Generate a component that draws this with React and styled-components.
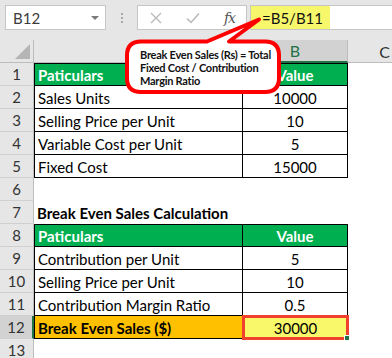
import React from "react";
import styled, { createGlobalStyle, css } from "styled-components";

const Global = createGlobalStyle`
  html, body {
    margin: 0;
    padding: 0;
    background: #fff;
  }
  body {
    font-family: Lato, "Open Sans", sans-serif;
  }
`;

const Frame = styled.div`
  position: relative;
  width: 392px;
  height: 358px;
  overflow: hidden;
  background: #fff;
`;

const Toolbar = styled.div`
  display: flex;
  align-items: center;
  height: 40px;
  padding: 0 0 5px 5px;
  box-sizing: border-box;
  background: #e6e6e6;
`;

const Box = styled.div`
  height: 25px;
  box-sizing: border-box;
  background: #fff;
  border: 1px solid #c6c6c6;
  display: flex;
  align-items: center;
`;

const NameBox = styled(Box)`
  width: 101px;
  padding: 0 6px 0 7px;
  justify-content: space-between;
  font-size: 15px;
  color: #3c3c3c;
`;

const Caret = styled.span`
  width: 0;
  height: 0;
  border-left: 4px solid transparent;
  border-right: 4px solid transparent;
  border-top: 4px solid #7a7a7a;
`;

const Grip = styled.div`
  width: 31px;
  display: flex;
  flex-direction: column;
  align-items: center;
  gap: 2px;

  i {
    width: 2px;
    height: 2px;
    background: #a8a8a8;
  }
`;

const FxButtons = styled(Box)`
  width: 110px;
  justify-content: space-between;
  padding: 0 11px 0 12px;
  color: #bcbcbc;
`;

const Fx = styled.span`
  font-family: "DejaVu Serif", "Liberation Serif", serif;
  font-style: italic;
  font-size: 14px;
  color: #555;
  letter-spacing: -1px;
`;

const FormulaInput = styled(Box)`
  flex: 1;
  margin-left: 3px;
  border-right: none;
  align-items: stretch;
`;

const Formula = styled.span`
  display: flex;
  align-items: center;
  padding: 0 7px 0 11px;
  background: #f7f76c;
  font-size: 15px;
  color: #111;
`;

const Row = styled.div`
  display: flex;
  height: 23px;
`;

const RowHead = styled.div`
  width: 34px;
  flex: none;
  box-sizing: border-box;
  display: flex;
  align-items: center;
  justify-content: center;
  background: ${({ selected }) => (selected ? "#d2d2d2" : "#e6e6e6")};
  border-right: ${({ selected }) =>
    selected ? "2px solid #217346" : "1px solid #bdbdbd"};
  border-bottom: 1px solid #d0d0d0;
  font-size: 15px;
  color: #333;
`;

const Corner = styled(RowHead)`
  align-items: flex-end;
  justify-content: flex-end;
  padding: 0 3px 3px 0;
  border-bottom: 1px solid #bdbdbd;
`;

const ColHead = styled.div`
  width: ${({ w }) => w}px;
  flex: none;
  box-sizing: border-box;
  display: flex;
  align-items: center;
  justify-content: center;
  background: ${({ selected }) => (selected ? "#d2d2d2" : "#e6e6e6")};
  border-right: 1px solid #bdbdbd;
  border-bottom: ${({ selected }) =>
    selected ? "2px solid #217346" : "1px solid #bdbdbd"};
  font-size: 16px;
  color: ${({ selected }) => (selected ? "#217346" : "#333")};
`;

const fills = {
  head: "#00b050",
  result: "#ffc000",
};

const Cell = styled.div`
  position: relative;
  box-sizing: border-box;
  display: flex;
  align-items: center;
  flex: none;
  width: ${({ w }) => w}px;
  padding: 1px 3px 0;
  font-size: 15px;
  color: #000;
  white-space: nowrap;
  justify-content: ${({ center }) => (center ? "center" : "flex-start")};
  background: ${({ kind }) => fills[kind] || "transparent"};
  font-weight: ${({ kind }) =>
    kind === "head" || kind === "result" || kind === "title" ? 700 : 400};
  ${({ kind }) => kind === "head" && "color: #fff;"}
  ${({ boxed, first, left }) =>
    boxed &&
    css`
      border-bottom: 1px solid #000;
      border-right: 1px solid #000;
      ${left && "border-left: 1px solid #000;"}
      ${first && "border-top: 1px solid #000;"}
    `}
`;

const Result = styled(Cell)`
  background: #f8f86a;
  border: 2px solid #f2402e;
  box-shadow: 0 0 0 1px #f2402e;
  z-index: 1;
`;

const Handle = styled.span`
  position: absolute;
  right: -4px;
  bottom: -4px;
  width: 4px;
  height: 4px;
  background: #217346;
  border: 1px solid #fff;
`;

const Callout = styled.div`
  position: absolute;
  left: 0;
  top: 0;
  width: 392px;
  height: 100px;
  pointer-events: none;

  svg {
    position: absolute;
    left: 0;
    top: 0;
  }
`;

const CalloutText = styled.div`
  position: absolute;
  left: 140px;
  top: 48px;
  font-family: Lato, "Open Sans", sans-serif;
  font-weight: 700;
  font-size: 11px;
  letter-spacing: -0.25px;
  line-height: 13px;
  color: #111;
  white-space: nowrap;
`;

const rows = [
  { n: 1, a: "Paticulars", b: "Value", kind: "head", first: true },
  { n: 2, a: "Sales Units", b: "10000", kind: "body" },
  { n: 3, a: "Selling Price per Unit", b: "10", kind: "body" },
  { n: 4, a: "Variable Cost per Unit", b: "5", kind: "body" },
  { n: 5, a: "Fixed Cost", b: "15000", kind: "body" },
  { n: 6, kind: "blank" },
  { n: 7, a: "Break Even Sales Calculation", kind: "title" },
  { n: 8, a: "Paticulars", b: "Value", kind: "head", first: true },
  { n: 9, a: "Contribution per Unit", b: "5", kind: "body" },
  { n: 10, a: "Selling Price per Unit", b: "10", kind: "body" },
  { n: 11, a: "Contribution Margin Ratio", b: "0.5", kind: "body" },
  { n: 12, a: "Break Even Sales ($)", b: "30000", kind: "result" },
  { n: 13, kind: "blank" },
];

function SheetRow({ n, a, b, kind, first }) {
  const boxed = kind === "head" || kind === "body" || kind === "result";
  return (
    <Row>
      <RowHead selected={kind === "result"}>{n}</RowHead>
      <Cell w={209} kind={kind} boxed={boxed} first={first} left>
        {a}
      </Cell>
      {kind === "result" ? (
        <Result w={105} center>
          {b}
          <Handle />
        </Result>
      ) : (
        <Cell w={105} kind={kind} boxed={boxed} first={first} center>
          {b}
        </Cell>
      )}
    </Row>
  );
}

export default function App() {
  return (
    <Frame>
      <Global />
      <Toolbar>
        <NameBox>
          B12
          <Caret />
        </NameBox>
        <Grip>
          <i />
          <i />
          <i />
        </Grip>
        <FxButtons>
          <svg width="12" height="12" viewBox="0 0 12 12">
            <path d="M1 1L11 11M11 1L1 11" stroke="#b8b8b8" strokeWidth="1.3" />
          </svg>
          <svg width="14" height="12" viewBox="0 0 14 12">
            <path d="M1 6.5L5 10.5L13 1.5" stroke="#b8b8b8" strokeWidth="1.5" fill="none" />
          </svg>
          <Fx>fx</Fx>
        </FxButtons>
        <FormulaInput>
          <Formula>=B5/B11</Formula>
        </FormulaInput>
      </Toolbar>
      <Row>
        <Corner>
          <svg width="15" height="15" viewBox="0 0 15 15">
            <path d="M15 0V15H0Z" fill="#b5b5b5" />
          </svg>
        </Corner>
        {/* column A's label sits under the callout and is not visible */}
        <ColHead w={209} />
        <ColHead w={105} selected>
          B
        </ColHead>
        <ColHead w={74}>C</ColHead>
      </Row>
      {rows.map((r) => (
        <SheetRow key={r.n} {...r} />
      ))}
      <Callout>
        <svg width="392" height="100" viewBox="0 0 392 100">
          <path
            d="M141 41.5H207L259 19.5L229 41.5H265Q279 41.5 279 55.5V78Q279 92 265 92H141Q127 92 127 78V55.5Q127 41.5 141 41.5Z"
            fill="#fff"
            stroke="#f00"
            strokeWidth="4"
            strokeLinejoin="round"
          />
        </svg>
        <CalloutText>
          Break Even Sales (Rs) = Total
          <br />
          Fixed Cost / Contribution
          <br />
          Margin Ratio
        </CalloutText>
      </Callout>
    </Frame>
  );
}
